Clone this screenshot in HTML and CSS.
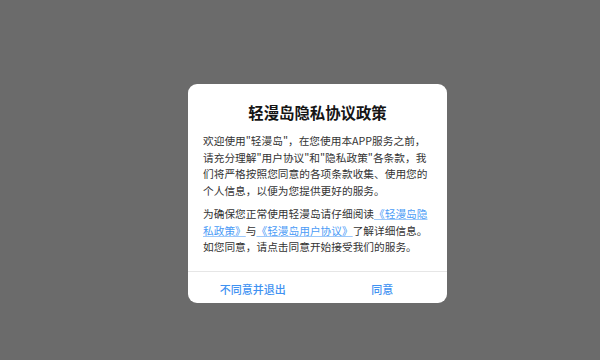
FILE: index.html
```html
<!DOCTYPE html>
<html lang="zh-CN">
<head>
<meta charset="utf-8">
<title>轻漫岛隐私协议政策</title>
<link rel="stylesheet" href="styles.css">
</head>
<body>
<div class="stage">
  <div class="dialog">
    <div class="dialog-body">
      <h1 class="title">轻漫岛隐私协议政策</h1>
      <p class="para">欢迎使用&quot;轻漫岛&quot;，在您使用本APP服务之前，请充分理解&quot;用户协议&quot;和&quot;隐私政策&quot;各条款，我们将严格按照您同意的各项条款收集、使用您的个人信息，以便为您提供更好的服务。</p>
      <p class="para second">为确保您正常使用轻漫岛请仔细阅读<a class="link" href="#">《轻漫岛隐私政策》</a>与<a class="link" href="#">《轻漫岛用户协议》</a>了解详细信息。如您同意，请点击同意开始接受我们的服务。</p>
    </div>
    <div class="dialog-footer">
      <button class="btn">不同意并退出</button>
      <button class="btn">同意</button>
    </div>
  </div>
</div>
</body>
</html>
```

FILE: styles.css
```css
html, body {
  margin: 0;
  padding: 0;
  width: 600px;
  height: 360px;
  background: #6b6b6b;
  overflow: hidden;
  font-family: "Noto Sans CJK SC", "Noto Sans", sans-serif;
}

.stage {
  padding: 84px 0 0 188px;
}

.dialog {
  width: 259px;
  background: #ffffff;
  border-radius: 9px;
  overflow: hidden;
}

.dialog-body {
  padding: 18px 15px 15px 15px;
}

.title {
  margin: 0 0 11px 0;
  font-size: 15.4px;
  line-height: 20px;
  font-weight: bold;
  color: #151515;
  text-align: center;
}

.para {
  margin: 0;
  font-size: 10.7px;
  line-height: 16.5px;
  color: #333333;
}

.para.second {
  margin-top: 7px;
}

.link {
  color: #4a9bf6;
  text-decoration: underline;
  text-decoration-color: #9cc8fa;
}

.dialog-footer {
  display: grid;
  grid-template-columns: 1fr 1fr;
  border-top: 1px solid #e6e6e6;
}

.btn {
  height: 31px;
  padding: 9px 0 5px 0;
  margin: 0;
  border: none;
  background: transparent;
  font-family: "Noto Sans CJK SC", "Noto Sans", sans-serif;
  font-size: 11px;
  line-height: 16px;
  font-weight: 500;
  color: #3f92f2;
  text-align: center;
}
```
